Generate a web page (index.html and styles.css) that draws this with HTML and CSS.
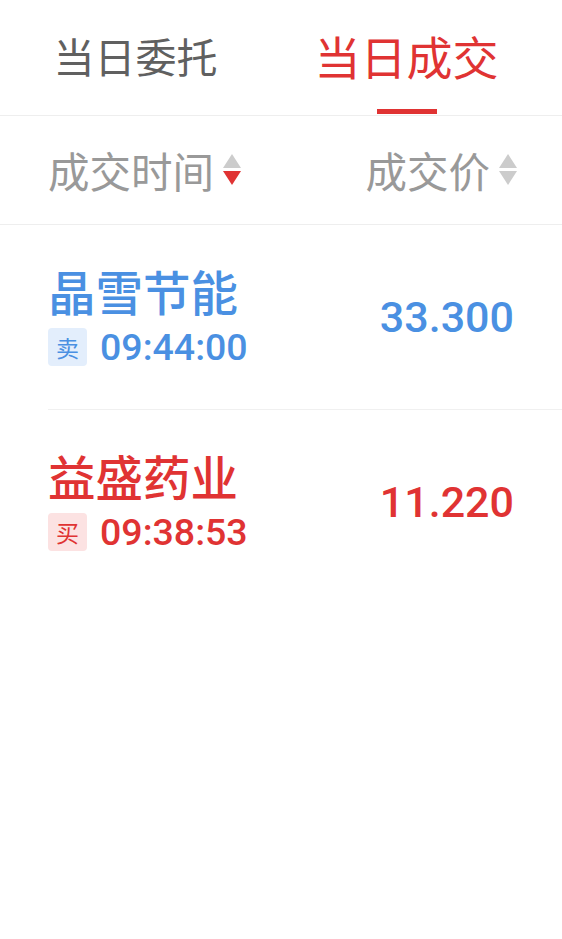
FILE: index.html
```html
<!DOCTYPE html>
<html lang="zh-CN">
<head>
    <meta charset="UTF-8">
    <title>当日成交</title>
    <link rel="stylesheet" href="styles.css">
</head>
<body>
<div class="tabs">
    <div class="tab">
        <span class="tab-text">当日委托</span>
    </div>
    <div class="tab active">
        <span class="tab-text">当日成交</span>
        <i class="tab-line"></i>
    </div>
</div>

<div class="list-head">
    <div class="sort">
        成交时间
        <svg class="sort-icon" width="18" height="32" viewBox="0 0 18 32">
            <polygon points="9,0 18,14 0,14" fill="#cccccc"/>
            <polygon points="0,17 18,17 9,31" fill="#e03333"/>
        </svg>
    </div>
    <div class="sort">
        成交价
        <svg class="sort-icon" width="18" height="32" viewBox="0 0 18 32">
            <polygon points="9,0 18,14 0,14" fill="#cccccc"/>
            <polygon points="0,17 18,17 9,31" fill="#cccccc"/>
        </svg>
    </div>
</div>

<ul class="deals">
    <li class="deal sell">
        <div class="deal-info">
            <div class="deal-name">晶雪节能</div>
            <div class="deal-meta">
                <span class="deal-tag">卖</span>
                <span class="deal-time">09:44:00</span>
            </div>
        </div>
        <div class="deal-price">33.300</div>
    </li>
    <li class="deal buy">
        <div class="deal-info">
            <div class="deal-name">益盛药业</div>
            <div class="deal-meta">
                <span class="deal-tag">买</span>
                <span class="deal-time">09:38:53</span>
            </div>
        </div>
        <div class="deal-price">11.220</div>
    </li>
</ul>
</body>
</html>
```

FILE: styles.css
```css
body {
    margin: 0;
    background: #ffffff;
    font-family: "Noto Sans CJK SC", "Noto Sans", sans-serif;
}

/* 顶部 tab */
.tabs {
    display: flex;
    padding-right: 20px;
    border-bottom: 1px solid #eeeeee;
}
.tab {
    flex: 1;
    height: 115px;
    display: flex;
    flex-direction: column;
    align-items: center;
    padding-top: 33px;
    box-sizing: border-box;
}
.tab-text {
    font-size: 41px;
    line-height: 44px;
    color: #606060;
}
.tab.active .tab-text {
    font-size: 46px;
    color: #e03333;
}
.tab-line {
    display: block;
    width: 60px;
    height: 5px;
    margin-top: auto;
    margin-bottom: 1px;
    background: #e03333;
}

/* 表头 */
.list-head {
    display: flex;
    justify-content: space-between;
    align-items: center;
    height: 108px;
    padding: 0 45px 0 48px;
    border-bottom: 1px solid #eeeeee;
}
.sort {
    display: flex;
    align-items: center;
    font-size: 41.5px;
    line-height: 40px;
    color: #999999;
}
.sort-icon {
    margin-left: 9px;
}

/* 成交列表 */
.deals {
    list-style: none;
    margin: 0;
    padding: 0;
}
.deal {
    display: flex;
    justify-content: space-between;
    align-items: center;
    height: 184px;
    margin-left: 48px;
    padding-right: 48px;
    border-bottom: 1px solid #f0f0f0;
}
.deal:last-child {
    border-bottom: none;
}
.deal-name {
    font-size: 47.5px;
    line-height: 46px;
    font-weight: 500;
}
.deal-meta {
    display: flex;
    align-items: center;
    margin-top: 14px;
}
.deal-tag {
    width: 39px;
    height: 38px;
    border-radius: 4px;
    font-size: 23px;
    line-height: 38px;
    text-align: center;
}
.deal-time {
    margin-left: 13px;
    font-family: Roboto, "Noto Sans", sans-serif;
    font-size: 37.5px;
    line-height: 38px;
    font-weight: 500;
}
.deal-price {
    font-family: Roboto, "Noto Sans", sans-serif;
    font-size: 43px;
    font-weight: 500;
}

.sell { color: #4a90e2; }
.sell .deal-tag { background: #e3eefc; }
.buy { color: #e03333; }
.buy .deal-tag { background: #fce2e2; }
```
